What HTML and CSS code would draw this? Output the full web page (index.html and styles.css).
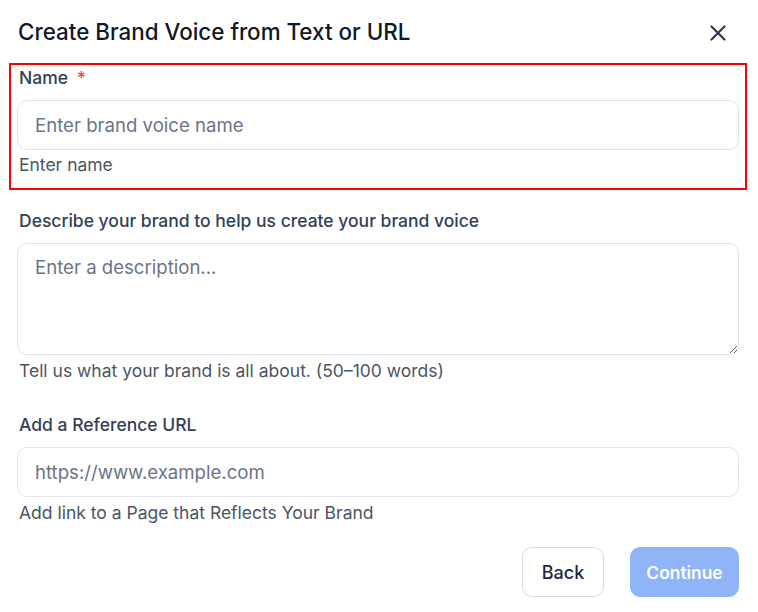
FILE: index.html
```html
<!DOCTYPE html>
<html lang="en">
<head>
<meta charset="utf-8">
<title>Create Brand Voice</title>
<link rel="stylesheet" href="styles.css">
</head>
<body>
<div class="modal">
  <header class="modal-header">
    <h1 class="modal-title">Create Brand Voice from Text or URL</h1>
    <button class="close-btn" aria-label="Close">
      <svg width="16" height="16" viewBox="0 0 16 16"><path d="M1.5 1.5 L14.5 14.5 M14.5 1.5 L1.5 14.5" stroke="#2d3a4f" stroke-width="2.2" stroke-linecap="round" fill="none"/></svg>
    </button>
  </header>

  <div class="field field-highlight">
    <label class="field-label">Name <span class="req">*</span></label>
    <input class="text-input" type="text" placeholder="Enter brand voice name">
    <p class="field-help">Enter name</p>
  </div>

  <div class="field field-desc">
    <label class="field-label">Describe your brand to help us create your brand voice</label>
    <textarea class="text-area" placeholder="Enter a description..."></textarea>
    <p class="field-help help-tight">Tell us what your brand is all about. (50–100 words)</p>
  </div>

  <div class="field field-url">
    <label class="field-label">Add a Reference URL</label>
    <input class="text-input" type="text" placeholder="https://www.example.com">
    <p class="field-help help-tight">Add link to a Page that Reflects Your Brand</p>
  </div>

  <div class="actions">
    <button class="btn btn-back">Back</button>
    <button class="btn btn-continue">Continue</button>
  </div>
</div>
</body>
</html>
```

FILE: styles.css
```css
* { box-sizing: border-box; }
html, body { margin: 0; padding: 0; background: #ffffff; }
body { font-family: Inter, "Noto Sans", sans-serif; color: #334155; }

.modal {
  width: 758px;
  padding: 20px 19px 0 17px;
  display: flex;
  flex-direction: column;
}

.modal-header {
  display: flex;
  align-items: center;
  justify-content: space-between;
  height: 24px;
}
.modal-title {
  margin: 0;
  font-size: 22.4px;
  font-weight: 500;
  line-height: 24px;
  color: #111827;
  padding-left: 1px;
}
.close-btn {
  border: 0;
  background: transparent;
  padding: 0;
  width: 16px;
  height: 16px;
  margin-right: 13px;
  margin-top: 2px;
  display: flex;
}

.field { display: flex; flex-direction: column; }
.field-highlight {
  margin: 19px -8px 0;
  border: 2px solid #ff0000;
  padding: 1px 6px 11px;
}
.field-desc { margin-top: 19px; }
.field-url { margin-top: 30px; }

.field-label {
  font-size: 17.5px;
  font-weight: 500;
  line-height: 24px;
  color: #334155;
  padding-left: 2px;
}
.req { color: #ef4444; margin-left: 4px; }

.text-input, .text-area {
  margin-top: 10px;
  width: 100%;
  border: 1px solid #e2e4ea;
  border-radius: 10px;
  font-family: Inter, "Noto Sans", sans-serif;
  font-size: 18.6px;
  color: #1e293b;
  padding: 0 17px;
  outline: none;
  background: #fff;
}
.text-input { height: 50px; }
.text-area {
  height: 112px;
  padding: 12px 17px;
  resize: vertical;
  display: block;
}
.text-input::placeholder, .text-area::placeholder { color: #6b7488; }

.field-help {
  margin: 3px 0 0;
  font-size: 17.5px;
  line-height: 24px;
  color: #4b5563;
  padding-left: 2px;
}
.help-tight { margin-top: 4px; }

.actions {
  margin-top: 22px;
  display: flex;
  justify-content: flex-end;
  gap: 26px;
}
.btn {
  height: 50px;
  border-radius: 10px;
  font-family: Inter, "Noto Sans", sans-serif;
  font-size: 18px;
  padding: 0;
  text-align: center;
}
.btn-back {
  width: 82px;
  background: #fff;
  border: 1px solid #d7dae2;
  color: #1e293b;
  font-weight: 500;
}
.btn-continue {
  width: 109px;
  background: #8fb4f8;
  border: 1px solid #8fb4f8;
  color: #ffffff;
  font-weight: 600;
  font-size: 17.4px;
}
```
